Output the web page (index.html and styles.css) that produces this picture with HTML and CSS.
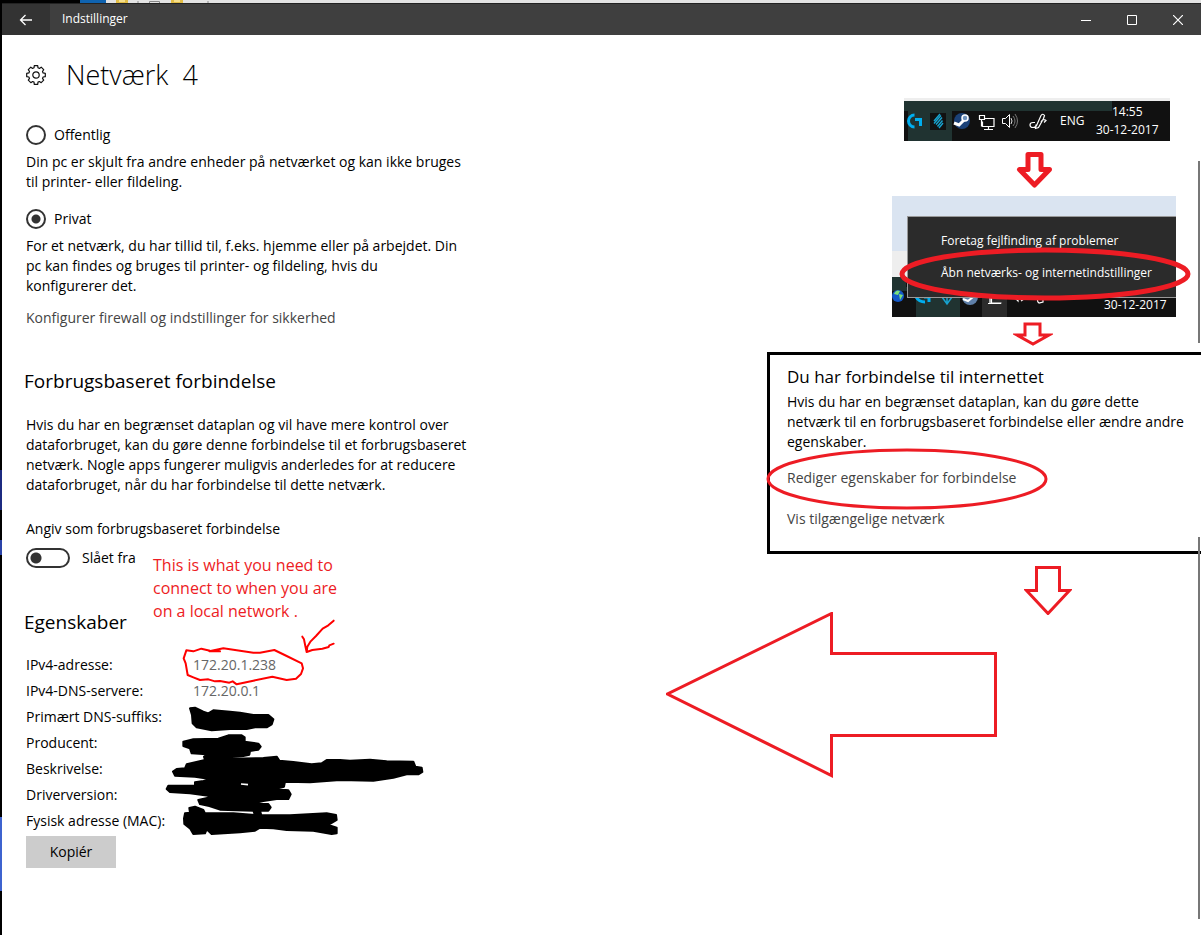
FILE: index.html
```html
<!DOCTYPE html>
<html lang="da">
<head>
<meta charset="utf-8">
<title>Indstillinger</title>
<link rel="stylesheet" href="styles.css">
</head>
<body>
<div class="desktop">
  <svg class="desktop-top" height="3" aria-hidden="true">
    <rect width="100%" height="3" fill="#e3e3e3"/>
    <rect width="80" height="3" fill="#000"/>
    <rect x="80" width="26" height="3" fill="#0f63b0"/>
    <path d="M116 0h12v3h-12zM171 0h12v3h-12z" fill="#e2bd45"/>
    <path d="M119 0h6v2h-6zM174 0h6v2h-6z" fill="#f6df8c"/>
    <path d="M149.500 3V1.500h10V3M137 2h2M207 2h2" fill="none" stroke="#888"/>
  </svg>
  <div class="window">
    <header class="titlebar">
      <button class="back" aria-label="Tilbage"><svg width="14" height="12" viewBox="0 0 14 12"><path d="M13 6H1.500M6.500 1l-5 5 5 5" fill="none" stroke="#fff" stroke-width="1.300"/></svg></button>
      <span class="title">Indstillinger</span>
      <button class="win" aria-label="Minimer"><svg width="10" height="10"><path d="M0 5.500h10" stroke="#fff"/></svg></button>
      <button class="win" aria-label="Maksimer"><svg width="10" height="10"><path d="M.5.5h9v9h-9z" fill="none" stroke="#fff"/></svg></button>
      <button class="win" aria-label="Luk"><svg width="10" height="10"><path d="M0 0l10 10M10 0L0 10" stroke="#fff" stroke-width="1.200"/></svg></button>
    </header>
    <main class="content">
      <section class="settings">
        <h1 class="page-title">
          <svg width="20" height="20" viewBox="0 0 20 20" fill="none" stroke="#111" stroke-width="1.200" stroke-linejoin="round"><circle cx="10" cy="10" r="3.200"/><path d="M8 2.800 8.300.7h3.400l.3 2.100 1.400.6 1.800-1.200 2.500 2.500-1.200 1.800.6 1.400 2.200.4v3.400l-2.200.3-.6 1.400 1.200 1.800-2.500 2.500-1.800-1.200-1.400.6-.3 2.200H8.300L8 17.100l-1.400-.6-1.800 1.200-2.500-2.500 1.200-1.800-.6-1.400-2.200-.3V8.300l2.200-.4.6-1.400-1.200-1.800 2.500-2.500 1.800 1.200z"/></svg>
          <span>Netværk&nbsp; 4</span>
        </h1>
        <label class="choice"><input type="radio" name="profile">Offentlig</label>
        <p class="text">Din pc er skjult fra andre enheder på netværket og kan ikke bruges<br>til printer- eller fildeling.</p>
        <label class="choice second"><input type="radio" name="profile" checked>Privat</label>
        <p class="text">For et netværk, du har tillid til, f.eks. hjemme eller på arbejdet. Din<br>pc kan findes og bruges til printer- og fildeling, hvis du<br>konfigurerer det.</p>
        <a class="link" href="#">Konfigurer firewall og indstillinger for sikkerhed</a>
        <h2 class="heading metered">Forbrugsbaseret forbindelse</h2>
        <p class="text">Hvis du har en begrænset dataplan og vil have mere kontrol over<br>dataforbruget, kan du gøre denne forbindelse til et forbrugsbaseret<br>netværk. Nogle apps fungerer muligvis anderledes for at reducere<br>dataforbruget, når du har forbindelse til dette netværk.</p>
        <label class="text switch-label" for="metered">Angiv som forbrugsbaseret forbindelse</label>
        <div class="switch-row"><input class="switch" type="checkbox" role="switch" id="metered"><span>Slået fra</span></div>
        <h2 class="heading props-title">Egenskaber</h2>
        <div class="props-wrap">
          <table class="props">
            <tr><th scope="row">IPv4-adresse:</th><td>172.20.1.238</td></tr>
            <tr><th scope="row">IPv4-DNS-servere:</th><td>172.20.0.1</td></tr>
            <tr><th scope="row">Primært DNS-suffiks:</th><td></td></tr>
            <tr><th scope="row">Producent:</th><td></td></tr>
            <tr><th scope="row">Beskrivelse:</th><td></td></tr>
            <tr><th scope="row">Driverversion:</th><td></td></tr>
            <tr><th scope="row">Fysisk adresse (MAC):</th><td></td></tr>
          </table>
          <p class="note">This is what you need to<br>connect to when you are<br>on a local network .</p>
          <svg class="scribbles" width="300" height="250" viewBox="0 0 900 750" aria-hidden="true">
            <g fill="none" stroke="#f00" stroke-width="6" stroke-linejoin="round" stroke-linecap="round">
              <path d="M139 151L160 154 184 146 210 152 240 154 208 154 250 145 300 152 340 158 360 158 403 150 440 168 485 190 489 205 483 222 468 236 440 240 397 230 340 242 290 253 278 244 268 248 240 243 225 244 205 238 180 240 160 232 143 225 137 190 131 175z"/>
              <path d="M581 62L565 76 548 86 528 108 512 124 502 140 500 156M487 110L492 118 496 138 500 156 517 150 547 146 566 141 568 136 581 131"/>
            </g>
            <g stroke="#000" stroke-linejoin="round" stroke-width="6">
              <path d="M150 325L165 323 190 335 205 340 220 331 270 335 300 338 340 345 385 345 400 358 395 373 380 382 345 382 320 387 270 387 215 391 170 382 158 370 156 345z"/>
              <path d="M130 425L160 418 235 416 265 406 305 406 314 412 314 425 355 431 362 440 355 449 330 453 328 464 310 468 275 470 275 476 370 474 410 470 418 482 460 486 515 493 545 490 560 480 600 480 630 482 690 479 740 484 820 485 826 500 845 503 847 516 835 523 800 523 760 533 700 542 600 540 510 547 435 545 432 560 405 567 445 571 452 583 445 597 410 597 370 603 340 610 385 612 392 622 385 632 360 632 364 646 450 646 560 640 588 645 590 660 565 675 590 683 590 700 575 702 520 692 440 690 400 685 360 683 345 692 300 697 215 702 200 688 195 700 160 702 150 685 133 672 132 655 135 640 150 638 148 624 165 620 190 630 195 640 280 640 345 645 340 632 240 629 208 618 180 612 175 600 205 593 205 587 150 580 90 576 80 567 85 557 165 557 165 547 190 543 215 538 165 530 105 527 99 515 110 507 135 505 140 493 195 480 192 470 200 463 155 460 150 445 130 438z"/>
              <path d="M303 552L324 554" stroke="#fff" stroke-width="5"/>
            </g>
          </svg>
        </div>
        <button class="copy">Kopiér</button>
      </section>
      <section class="guide">
        <div class="tray">
          <svg class="tray-icons" width="150" height="40" viewBox="0 0 150 40" aria-hidden="true">
            <path d="M0 0h208v10H48v30H4V10H0z" fill="#203331"/>
            <path d="M10.500 14a6 6 0 0 0 0 12M11 18.500h5.500V25" fill="none" stroke="#00aeef" stroke-width="3"/>
            <path d="M26 12h16v17H26z" fill="#111"/>
            <path d="M30 20l6-7M30 22.500l7-8M32 23.500l6-7M33.500 25.500l5-6M35 27l4-5" fill="none" stroke="#17a3cf" stroke-width="1.400"/>
            <circle cx="58" cy="20" r="8" fill="#1b4177"/><path d="M50 22l5 2 5-5" fill="none" stroke="#fff" stroke-width="3"/><circle cx="61" cy="17" r="3" fill="#6f93bf" stroke="#fff" stroke-width="1.500"/>
            <path d="M80 17.500h10v8H78.500v-5M84.500 26v2M80 28.500h9M75.500 14.500h5v4h-5zM77.500 19v6h1" fill="none" stroke="#fff" stroke-width="1.200"/>
            <path d="M98.500 17.500h3l4-4v13l-4-4h-3z" fill="none" stroke="#fff"/><path d="M107 17q2 3 0 6" fill="none" stroke="#ddd"/><path d="M109 15q4 5 0 10M111 13q5 7 0 14" fill="none" stroke="#777"/>
            <path d="M131 21.500h-2q-3 0-3 2.500t3 2.500q3 0 4-3l4-9q2-2.500 3.500 0l-1 3-5 9-3 1 .5-4M137 21q2-4 5-1.500l-2 2" fill="none" stroke="#fff" stroke-width="1.200"/>
          </svg>
          <span class="lang">ENG</span>
          <span class="clock">14:55<br>30-12-2017</span>
        </div>
        <svg class="arrow first" width="36" height="38" viewBox="0 0 36 38"><path d="M12 3.500h13v15h8.500L18.500 34 3.500 18.500H12z" fill="#fff" stroke="#ed1c24" stroke-width="5" stroke-linejoin="round"/></svg>
        <div class="popup">
          <div class="popup-tray">
            <svg width="170" height="40" viewBox="0 0 170 40" aria-hidden="true">
              <path d="M0 0h14v10h54v30H24V14H0z" fill="#203331"/><path d="M90 20h25v20H90z" fill="#2b2b2b"/>
              <circle cx="6" cy="19" r="6" fill="#1459c8"/><path d="M2 17q2-5 6-3l-2 4zM7 17l4 1-3 5z" fill="#7be07a"/>
              <path d="M24 20q3 5 9 5M32 20h5v5" fill="none" stroke="#00aeef" stroke-width="3"/>
              <path d="M50 20l5 7 5-7M55 20v6" fill="none" stroke="#17a3cf" stroke-width="1.500"/>
              <circle cx="78" cy="20" r="8" fill="#5f7fa8"/><path d="M71 22l5 2 5-4" fill="none" stroke="#fff" stroke-width="2"/>
              <path d="M99.500 20v6h10M96 26.500h13M98 20v7M103 20h7M121 19l5 5v-5M129 24l3-2M147 20q-3 4 0 6l4-1 0-3" fill="none" stroke="#fff" stroke-width="1.200"/>
            </svg>
            <span>30-12-2017</span>
          </div>
          <div class="menu">
            <button class="item">Foretag fejlfinding af problemer</button>
            <button class="item">Åbn netværks- og internetindstillinger</button>
          </div>
          <svg class="ring menu-ring" width="292" height="56" viewBox="0 0 292 56" aria-hidden="true"><ellipse cx="146" cy="28" rx="143" ry="24" fill="none" stroke="#ed1c24" stroke-width="5"/></svg>
        </div>
        <svg class="arrow second" width="40" height="26" viewBox="0 0 40 26"><path d="M12 2h15v11h9L20 22 4 13h8z" fill="#fff" stroke="#ed1c24" stroke-width="3"/></svg>
        <div class="status">
          <h3 class="status-title">Du har forbindelse til internettet</h3>
          <p class="text">Hvis du har en begrænset dataplan, kan du gøre dette<br>netværk til en forbrugsbaseret forbindelse eller ændre andre<br>egenskaber.</p>
          <a class="link edit" href="#">Rediger egenskaber for forbindelse</a>
          <a class="link show" href="#">Vis tilgængelige netværk</a>
          <svg class="ring link-ring" width="282" height="62" viewBox="0 0 282 62" aria-hidden="true"><ellipse cx="141" cy="31" rx="139" ry="29" fill="none" stroke="#ed1c24" stroke-width="3"/></svg>
        </div>
        <svg class="arrow third" width="48" height="50" viewBox="0 0 48 50"><path d="M12.500 2.500h23v23h10L24 48.500 2.500 25.500h10z" fill="#fff" stroke="#ed1c24" stroke-width="3"/></svg>
        <svg class="big-arrow" width="332" height="166" viewBox="0 0 332 166"><path d="M165.500 1.500v40h164v82h-164v40L1.500 82z" fill="#fff" stroke="#ed1c24" stroke-width="3"/></svg>
      </section>
      <i class="scroll upper"></i><i class="scroll lower"></i>
    </main>
  </div>
</div>
</body>
</html>
```
FILE: styles.css
```css
* { box-sizing: border-box; }
body { margin: 0; background: #fff; color: #000; font: 14px/20px "Open Sans", "Noto Sans", sans-serif; overflow: hidden; }
h1, h2, h3, p { margin: 0; font-weight: 400; }
button { font: inherit; border: 0; padding: 0; }
svg { display: block; }
.desktop { display: flex; flex-direction: column; min-height: 100vh; }
.desktop-top { width: 100%; }
.window { flex: 1; display: flex; flex-direction: column; border-left: 2px solid; border-image: linear-gradient(#000 467px, #1c2a80 467px 507px, #000 507px 537px, #2a43a8 537px 552px, #000 552px 813px, #3e63cf 813px 887px, #000 887px) 1; }
.titlebar { display: flex; align-items: stretch; height: 32px; background: #3f3f3f; border-top: 1px solid #222; color: #fff; font-size: 12px; line-height: 30px; }
.back, .win { display: flex; align-items: center; justify-content: center; background: none; }
.back { width: 48px; background: #333; }
.title { flex: 1; padding-left: 12px; }
.win { width: 46px; }
.content { position: relative; flex: 1; display: flex; justify-content: space-between; }
.settings { padding: 20px 0 0 24px; white-space: nowrap; }
.page-title { display: flex; align-items: center; gap: 20px; font-size: 27px; line-height: 40px; font-weight: 300; margin-bottom: 30px; }
.choice { display: flex; align-items: center; gap: 8px; margin-bottom: 7px; }
.choice input { appearance: none; width: 20px; height: 20px; margin: 0; border: 2px solid #333; border-radius: 50%; }
.choice input:checked { background: radial-gradient(circle, #333 4px, #fff 5px); }
.second { margin-top: 17px; }
.link { display: block; color: #444; text-decoration: none; }
.settings > .link { margin-top: 12px; }
.heading { margin-left: -2px; font-size: 19px; line-height: 28px; }
.settings .metered { margin-top: 39px; margin-bottom: 20px; }
.switch-label { display: block; margin-top: 24px; }
.switch-row { display: flex; align-items: center; gap: 12px; margin-top: 9px; }
.switch { appearance: none; width: 44px; height: 20px; margin: 0; border: 2px solid #333; border-radius: 10px; background: radial-gradient(circle at 8px 8px, #333 5px, #fff 6px); }
.settings .props-title { margin-top: 40px; margin-bottom: 16px; }
.props-wrap { position: relative; }
.props { border-collapse: collapse; }
.props th, .props td { height: 26px; padding: 0; text-align: left; font-weight: 400; }
.props th { width: 167px; }
.props td { color: #666; }
.note { position: absolute; left: 127px; top: -98px; color: #ed1c24; font-size: 16px; line-height: 23px; }
.scribbles { position: absolute; left: 114px; top: -52px; }
.copy { display: block; width: 90px; height: 32px; margin-top: 2px; background: #ccc; }
.guide { display: flex; flex-direction: column; width: 535px; padding-top: 63px; white-space: nowrap; }
.tray { position: relative; align-self: flex-end; display: flex; align-items: center; width: 266px; height: 43px; margin-right: 31px; border-top: 3px solid #eee; background: #111; color: #fff; font-size: 12px; overflow: hidden; }
.tray-icons { overflow: visible; }
.lang { position: relative; margin-left: 6px; }
.clock { position: relative; flex: 1; text-align: center; line-height: 18px; }
.arrow { align-self: flex-end; }
.first { margin: 10px 149px 7px 0; }
.popup { position: relative; align-self: flex-end; width: 284px; height: 121px; margin-right: 25px; padding: 20px 0 0 15px; background: linear-gradient(#dae4f1 55px, #eee 55px); color: #fff; font-size: 12px; }
.popup-tray { position: absolute; left: 0; right: 0; bottom: 0; display: flex; height: 40px; background: #111; }
.popup-tray span { margin: 18px 0 0 42px; }
.menu { position: relative; display: flex; flex-direction: column; height: 82px; padding-top: 8px; background: #2b2b2b; border: 1px solid #999; border-right: 0; }
.item { height: 32px; padding-left: 33px; background: none; color: #fff; text-align: left; }
.ring { position: absolute; }
.menu-ring { left: 7px; top: 50px; }
.second.arrow { margin: 5px 148px 4px 0; }
.status { position: relative; align-self: flex-end; width: 434px; height: 202px; padding: 12px 0 0 17px; border: 3px solid #000; border-right: 0; }
.status-title { font-size: 17px; line-height: 20px; margin-bottom: 5px; }
.edit { margin-top: 16px; }
.show { margin-top: 21px; }
.link-ring { left: -4px; top: 93px; }
.third { margin: 11px 129px 0 0; }
.big-arrow { margin-top: -3px; }
.scroll { position: absolute; right: 1px; width: 2px; background: #777; }
.upper { top: 126px; height: 182px; }
.lower { top: 502px; height: 382px; }
```
